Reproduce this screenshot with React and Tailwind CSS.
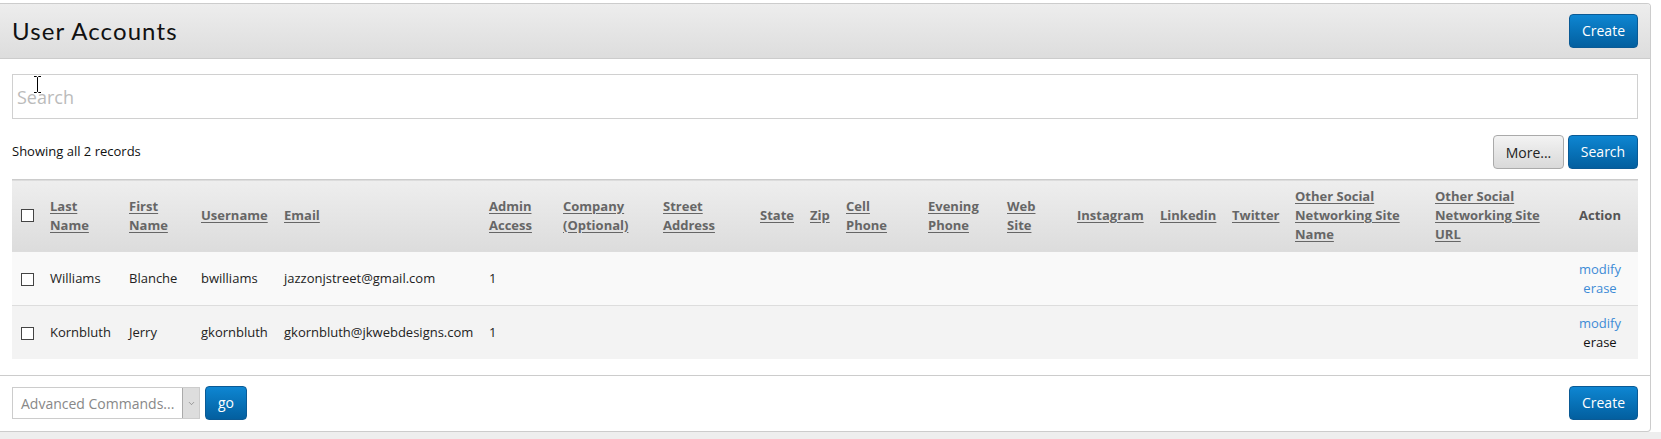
import { ChevronDown } from 'lucide-react';

// column definitions for the accounts grid: header lines + fixed widths
const COLUMNS = [
  { key: 'last', lines: ['Last', 'Name'], width: 'w-[79px]' },
  { key: 'first', lines: ['First', 'Name'], width: 'w-[72px]' },
  { key: 'username', lines: ['Username'], width: 'w-[83px]' },
  { key: 'email', lines: ['Email'], width: 'w-[205px]' },
  { key: 'admin', lines: ['Admin', 'Access'], width: 'w-[74px]' },
  { key: 'company', lines: ['Company', '(Optional)'], width: 'w-[100px]' },
  { key: 'street', lines: ['Street', 'Address'], width: 'w-[97px]' },
  { key: 'state', lines: ['State'], width: 'w-[50px]' },
  { key: 'zip', lines: ['Zip'], width: 'w-[36px]' },
  { key: 'cell', lines: ['Cell', 'Phone'], width: 'w-[82px]' },
  { key: 'evening', lines: ['Evening', 'Phone'], width: 'w-[79px]' },
  { key: 'web', lines: ['Web', 'Site'], width: 'w-[70px]' },
  { key: 'instagram', lines: ['Instagram'], width: 'w-[83px]' },
  { key: 'linkedin', lines: ['Linkedin'], width: 'w-[72px]' },
  { key: 'twitter', lines: ['Twitter'], width: 'w-[63px]' },
  { key: 'otherName', lines: ['Other Social', 'Networking Site', 'Name'], width: 'w-[140px]' },
  { key: 'otherUrl', lines: ['Other Social', 'Networking Site', 'URL'], width: 'w-[144px]' },
];

const USERS = [
  {
    id: 1,
    last: 'Williams',
    first: 'Blanche',
    username: 'bwilliams',
    email: 'jazzonjstreet@gmail.com',
    admin: '1',
    eraseVisited: false,
  },
  {
    id: 2,
    last: 'Kornbluth',
    first: 'Jerry',
    username: 'gkornbluth',
    email: 'gkornbluth@jkwebdesigns.com',
    admin: '1',
    eraseVisited: true,
  },
];

const Checkbox = () => (
  <span className="block w-[13px] h-[13px] border border-[#444] bg-white" />
);

const BlueButton = ({ children, className = '' }) => (
  <button
    className={`h-[34px] rounded-[4px] border border-[#0a5a95] bg-linear-to-b from-[#0e86d2] to-[#035f9f] text-white text-[14px] leading-none ${className}`}
  >
    {children}
  </button>
);

// mouse text cursor hovering the search field
const IBeam = () => (
  <svg className="absolute left-[21px] top-[2px]" width="9" height="17" viewBox="0 0 9 17">
    <path d="M1 0.5h2.5L4.5 1.5L5.5 0.5H8M4.5 1.5V15.5M1 16.5h2.5L4.5 15.5L5.5 16.5H8" fill="none" stroke="#fff" strokeWidth="2.5" />
    <path d="M1 0.5h2.5L4.5 1.5L5.5 0.5H8M4.5 1.5V15.5M1 16.5h2.5L4.5 15.5L5.5 16.5H8" fill="none" stroke="#000" strokeWidth="1" />
  </svg>
);

export default function App() {
  return (
    <div className="w-[1661px] h-[439px] bg-white pt-[3px] font-['Open_Sans',sans-serif] text-[#222] overflow-hidden">
      <div className="mr-[10px] border-t border-r border-b border-[#cccccc] rounded-r-[4px] bg-white overflow-hidden">
        {/* Page header */}
        <div className="h-[55px] flex items-center justify-between pl-[12px] pr-[12px] border-b border-[#cccccc] bg-linear-to-b from-[#ededed] to-[#dddddd]">
          <h1 className="font-['Lato',sans-serif] text-[24px] tracking-[1.1px] text-[#111]">User Accounts</h1>
          <BlueButton className="w-[69px]">Create</BlueButton>
        </div>

        <div className="px-[12px] pt-[15px] pb-[16px]">
          {/* Search field */}
          <div className="relative">
            <input
              className="w-full h-[45px] border border-[#d0d0d0] px-[4px] text-[18px] text-[#333] placeholder:text-[#bbbbbb] outline-none"
              placeholder="Search"
            />
            <IBeam />
          </div>

          {/* Record count + search actions */}
          <div className="mt-[16px] h-[34px] flex items-center justify-between">
            <span className="text-[13px] text-[#111]">Showing all 2 records</span>
            <div className="flex items-center gap-[4px]">
              <button className="w-[71px] h-[34px] rounded-[4px] border border-[#aaaaaa] bg-linear-to-b from-[#f3f3f3] to-[#d9d9d9] text-[14px] text-[#222]">
                More...
              </button>
              <BlueButton className="w-[70px]">Search</BlueButton>
            </div>
          </div>

          {/* Accounts grid */}
          <table className="mt-[10px] w-full table-fixed border-collapse text-[13px]">
            <colgroup>
              <col className="w-[30px]" />
              {COLUMNS.map((c) => (
                <col key={c.key} className={c.width} />
              ))}
              <col className="w-[67px]" />
            </colgroup>
            <thead>
              <tr className="bg-linear-to-b from-[#eeeeee] to-[#dcdcdc] border-t border-[#cccccc]">
                <th className="pl-[9px] py-[7px] align-middle">
                  <Checkbox />
                </th>
                {COLUMNS.map((c) => (
                  <th key={c.key} className="px-[8px] py-[7px] text-left align-middle font-bold leading-[19px] whitespace-nowrap">
                    <a className="text-[#666666]">
                      {c.lines.map((line, i) => (
                        <span key={i} className="block">
                          <span className="underline underline-offset-[2px]">{line}</span>
                        </span>
                      ))}
                    </a>
                  </th>
                ))}
                <th className="pl-[8px] pr-[17px] py-[7px] text-center align-middle font-bold text-[#555555] leading-[19px]">
                  Action
                </th>
              </tr>
            </thead>
            <tbody>
              {USERS.map((u, idx) => (
                <tr
                  key={u.id}
                  className={`border-t border-[#dddddd] ${idx === 0 ? 'bg-[#f9f9f9]' : 'bg-[#f3f3f3]'}`}
                >
                  <td className="pl-[9px] pt-[8px] pb-[7px] align-middle">
                    <Checkbox />
                  </td>
                  <td className="px-[8px] align-middle whitespace-nowrap">{u.last}</td>
                  <td className="px-[8px] align-middle whitespace-nowrap">{u.first}</td>
                  <td className="px-[8px] align-middle whitespace-nowrap">{u.username}</td>
                  <td className="px-[8px] align-middle whitespace-nowrap">{u.email}</td>
                  <td className="px-[8px] align-middle">{u.admin}</td>
                  {COLUMNS.slice(5).map((c) => (
                    <td key={c.key} className="px-[8px] align-middle" />
                  ))}
                  <td className="pl-[8px] pr-[17px] pt-[8px] pb-[7px] text-center align-middle leading-[19px]">
                    <a className="block text-[#3d8bd6]">modify</a>
                    <a className={`block ${u.eraseVisited ? 'text-[#111]' : 'text-[#3d8bd6]'}`}>erase</a>
                  </td>
                </tr>
              ))}
            </tbody>
          </table>
        </div>

        {/* Footer commands */}
        <div className="border-t border-[#cccccc] px-[12px] pt-[10px] pb-[11px] flex items-center justify-between">
          <div className="flex items-center gap-[5px]">
            <div className="flex h-[32px] w-[188px] border border-[#cccccc] bg-white">
              <span className="flex-1 flex items-center pl-[8px] text-[14px] text-[#888888]">Advanced Commands...</span>
              <span className="w-[17px] flex items-center justify-center bg-[#dddddd] border-l border-[#aaaaaa]">
                <ChevronDown className="w-[9px] h-[9px] text-[#666]" strokeWidth={1.5} />
              </span>
            </div>
            <BlueButton className="w-[42px] h-[32px]">go</BlueButton>
          </div>
          <BlueButton className="w-[69px] h-[33px]">Create</BlueButton>
        </div>
      </div>
      <div className="h-[20px] bg-[#eeeeee]" />
    </div>
  );
}
